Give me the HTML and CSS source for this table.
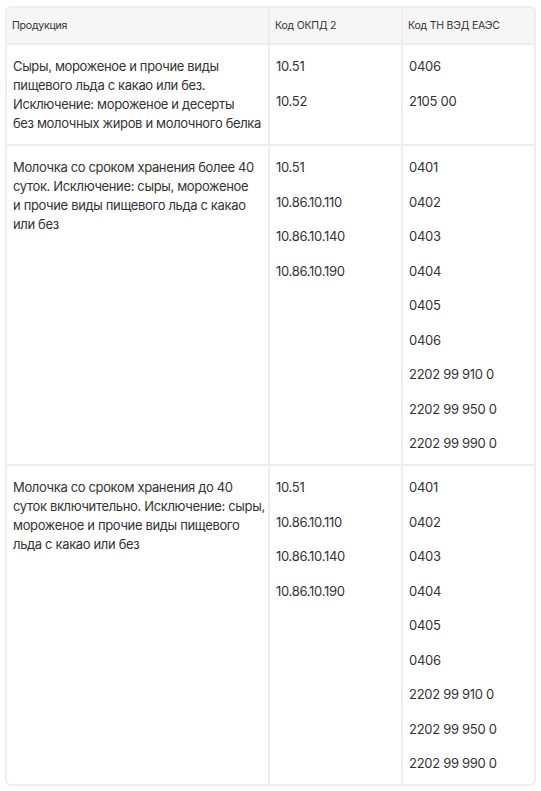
FILE: index.html
```html
<!DOCTYPE html>
<html lang="ru">
<head>
<meta charset="utf-8">
<link rel="stylesheet" href="styles.css">
</head>
<body>
<div class="wrap">
<table class="tbl">
<colgroup><col class="c1"><col class="c2"><col class="c3"></colgroup>
<thead>
<tr><th>Продукция</th><th>Код ОКПД 2</th><th>Код ТН ВЭД ЕАЭС</th></tr>
</thead>
<tbody>
<tr>
<td class="name">Сыры, мороженое и прочие виды<br>пищевого льда с какао или без.<br>Исключение: мороженое и десерты<br>без молочных жиров и молочного белка</td>
<td><p>10.51</p><p>10.52</p></td>
<td><p>0406</p><p>2105 00</p></td>
</tr>
<tr>
<td class="name">Молочка со сроком хранения более 40<br>суток. Исключение: сыры, мороженое<br>и прочие виды пищевого льда с какао<br>или без</td>
<td><p>10.51</p><p>10.86.10.110</p><p>10.86.10.140</p><p>10.86.10.190</p></td>
<td><p>0401</p><p>0402</p><p>0403</p><p>0404</p><p>0405</p><p>0406</p><p>2202 99 910 0</p><p>2202 99 950 0</p><p>2202 99 990 0</p></td>
</tr>
<tr>
<td class="name">Молочка со сроком хранения до 40<br>суток включительно. Исключение: сыры,<br>мороженое и прочие виды пищевого<br>льда с какао или без</td>
<td><p>10.51</p><p>10.86.10.110</p><p>10.86.10.140</p><p>10.86.10.190</p></td>
<td><p>0401</p><p>0402</p><p>0403</p><p>0404</p><p>0405</p><p>0406</p><p>2202 99 910 0</p><p>2202 99 950 0</p><p>2202 99 990 0</p></td>
</tr>
</tbody>
</table>
</div>
</body>
</html>
```
FILE: styles.css
```css
html, body { margin: 0; padding: 0; background: #fff; }
body {
  padding: 6px 5px 0 5px;
  font-family: Inter, "Noto Sans", sans-serif;
  color: #333333;
}
.wrap {
  width: 527px;
  border: 2px solid #eeeeee;
  border-radius: 6px;
  overflow: hidden;
}
.tbl {
  width: 100%;
  border-collapse: separate;
  border-spacing: 0;
  table-layout: fixed;
}
.c1 { width: 263px; }
.c2 { width: 133px; }
.tbl th {
  background: #f6f6f6;
  font-size: 10.5px;
  font-weight: 400;
  text-align: left;
  height: 35px;
  padding: 0 5px;
  border-bottom: 2px solid #eeeeee;
  border-right: 2px solid #eeeeee;
  letter-spacing: -0.2px;
}
.tbl td {
  font-size: 13px;
  line-height: 19px;
  vertical-align: top;
  padding: 12px 2px 11px 6px;
  border-bottom: 2px solid #eeeeee;
  border-right: 2px solid #eeeeee;
  letter-spacing: -0.3px;
}
.tbl td.name { white-space: nowrap; letter-spacing: -0.35px; }
.tbl th:last-child, .tbl td:last-child { border-right: 0; }
.tbl tbody tr:last-child td { border-bottom: 0; }
.tbl p { margin: 0 0 15.5px 0; }
.tbl p:last-child { margin-bottom: 0; }
```
